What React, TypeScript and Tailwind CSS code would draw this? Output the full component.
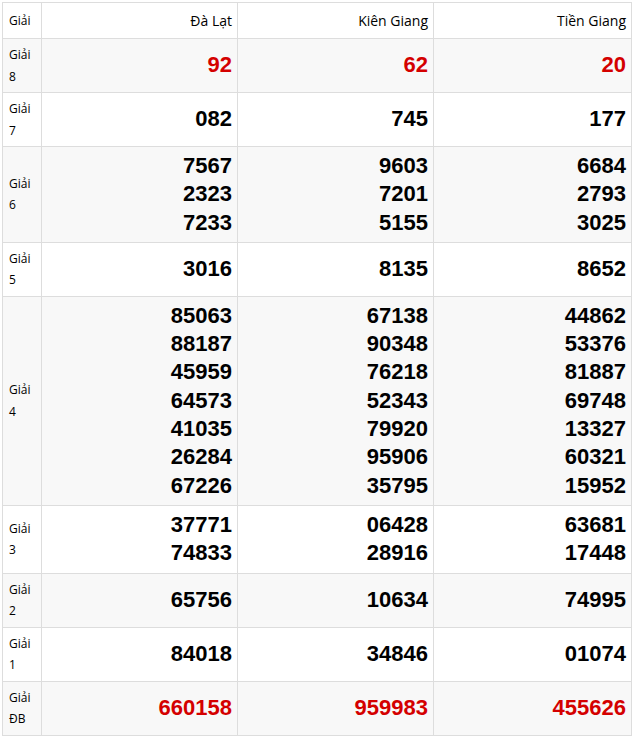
import React from "react";

type Row = { label: string[]; cols: string[][]; red?: boolean };

const rows: Row[] = [
  { label: ["Giải", "8"], cols: [["92"], ["62"], ["20"]], red: true },
  { label: ["Giải", "7"], cols: [["082"], ["745"], ["177"]] },
  {
    label: ["Giải", "6"],
    cols: [
      ["7567", "2323", "7233"],
      ["9603", "7201", "5155"],
      ["6684", "2793", "3025"],
    ],
  },
  { label: ["Giải", "5"], cols: [["3016"], ["8135"], ["8652"]] },
  {
    label: ["Giải", "4"],
    cols: [
      ["85063", "88187", "45959", "64573", "41035", "26284", "67226"],
      ["67138", "90348", "76218", "52343", "79920", "95906", "35795"],
      ["44862", "53376", "81887", "69748", "13327", "60321", "15952"],
    ],
  },
  {
    label: ["Giải", "3"],
    cols: [
      ["37771", "74833"],
      ["06428", "28916"],
      ["63681", "17448"],
    ],
  },
  { label: ["Giải", "2"], cols: [["65756"], ["10634"], ["74995"]] },
  { label: ["Giải", "1"], cols: [["84018"], ["34846"], ["01074"]] },
  { label: ["Giải", "ĐB"], cols: [["660158"], ["959983"], ["455626"]], red: true },
];

const sans = { fontFamily: '"Open Sans", "Noto Sans", sans-serif' };
const arial = { fontFamily: '"Liberation Sans", Arial, sans-serif' };

export default function App() {
  return (
    <div className="w-[633px] bg-white p-[2px]">
      <table className="w-[629px] table-fixed border-collapse text-black">
        <colgroup>
          <col className="w-[39px]" />
          <col className="w-[196px]" />
          <col className="w-[196px]" />
          <col className="w-[198px]" />
        </colgroup>
        <thead>
          <tr className="bg-white">
            <th
              className="border border-[#dddddd] pl-[6px] pr-[4px] py-[5px] text-left align-middle text-[12px] font-normal leading-[25px]"
              style={sans}
            >
              Giải
            </th>
            {["Đà Lạt", "Kiên Giang", "Tiền Giang"].map((h) => (
              <th
                key={h}
                className="border border-[#dddddd] pr-[5px] py-[5px] text-right align-middle text-[14px] font-normal leading-[25px]"
                style={sans}
              >
                {h}
              </th>
            ))}
          </tr>
        </thead>
        <tbody>
          {rows.map((r, i) => (
            <tr key={i} className={i % 2 === 0 ? "bg-[#f8f8f8]" : "bg-white"}>
              <td
                className="border border-[#dddddd] pl-[6px] pr-[2px] py-[5px] align-middle text-[12px] leading-[21.5px]"
                style={sans}
              >
                {r.label.map((l) => (
                  <div key={l}>{l}</div>
                ))}
              </td>
              {r.cols.map((c, j) => (
                <td
                  key={j}
                  className={`border border-[#dddddd] pr-[5px] py-[5px] text-right align-middle text-[22px] font-bold leading-[28.3px] ${
                    r.red ? "text-[#d40000]" : "text-black"
                  }`}
                  style={arial}
                >
                  {c.map((n, k) => (
                    <div key={k}>{n}</div>
                  ))}
                </td>
              ))}
            </tr>
          ))}
        </tbody>
      </table>
    </div>
  );
}
